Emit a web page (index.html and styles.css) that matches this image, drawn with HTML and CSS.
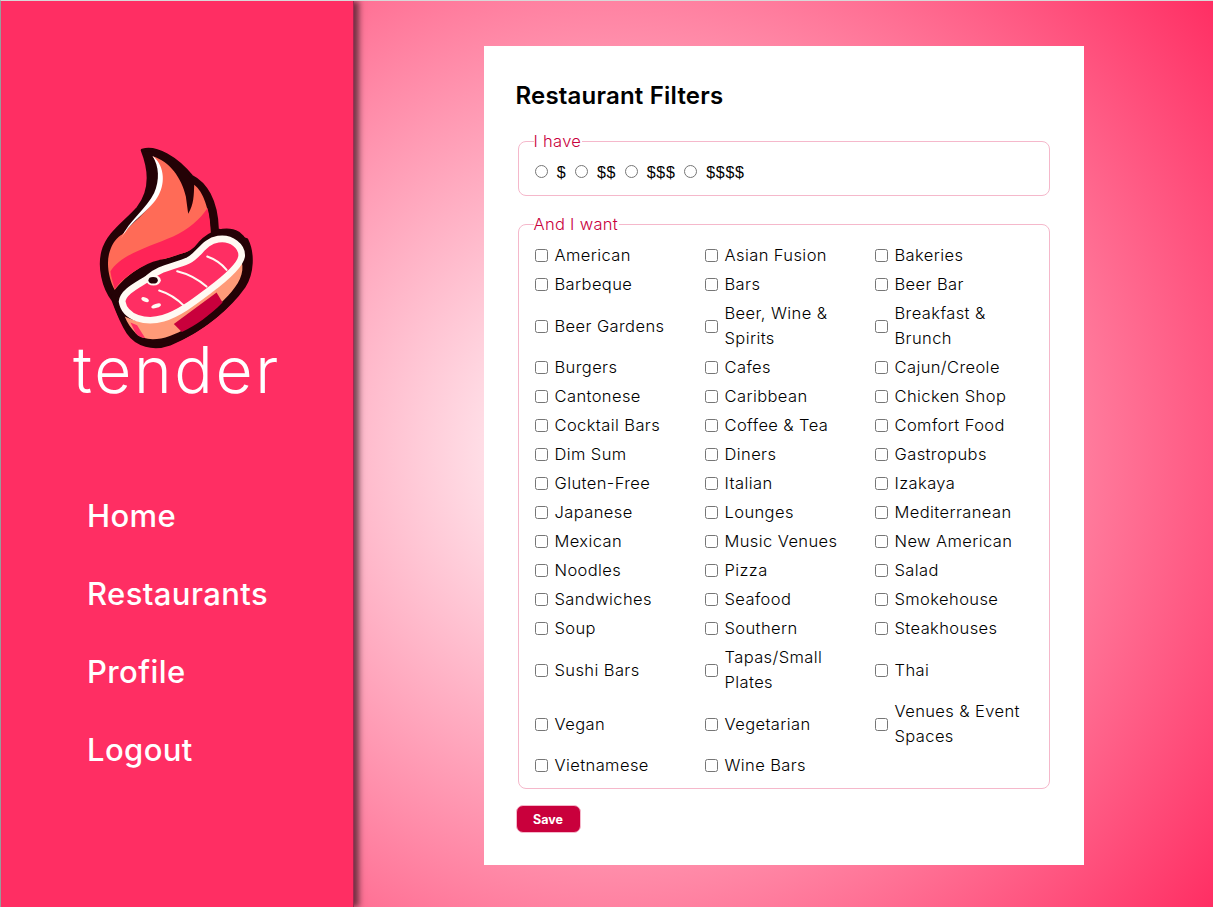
FILE: index.html
```html
<!DOCTYPE html>
<html lang="en">

<head>
    <meta charset="UTF-8">
    <meta name="viewport" content="width=device-width, initial-scale=1.0">
    <title>Restaurant Filters - tender</title>
    <link rel="stylesheet" href="styles.css">
</head>

<body>
    <aside class="sidebar">
        <div class="brand">
            <svg class="logo" viewBox="100 40 500 620" aria-hidden="true">
                <path class="outline" d="M248 62C290 50 350 85 395 140C435 160 470 210 472 300L560 330C580 370 578 430 552 470C510 530 430 600 330 642C280 660 230 645 205 608C190 585 175 550 160 510C130 470 118 410 130 365C145 310 195 280 235 235C270 190 275 130 248 62Z"/>
                <path class="flame" d="M278 80C330 95 365 145 378 200L385 252C402 225 402 195 403 165C430 185 450 240 452 310L425 345C395 370 300 385 240 415C205 435 180 460 165 480C148 450 138 400 150 365C165 320 185 320 195 305C230 270 280 230 295 190C310 150 305 110 278 80Z"/>
                <path class="flame-band" d="M152 425C180 375 270 350 340 320C385 300 420 270 443 235C450 262 452 290 452 312L425 345C395 370 300 385 240 415C205 435 180 455 165 478C160 460 155 445 152 425Z"/>
                <path class="flame-shine" d="M278 78C312 105 318 155 297 195C275 240 215 270 185 325C205 275 262 235 283 190C300 150 298 110 278 78Z"/>
                <path class="steak-dark" d="M160 500C190 450 250 405 300 395C350 390 395 375 420 340C450 305 500 290 535 310C570 335 575 400 552 460C520 520 440 595 340 635C280 655 235 640 210 610C190 580 170 540 160 500Z"/>
                <path class="steak-side" d="M195 560C250 590 320 575 380 535C440 500 500 460 545 395C555 430 535 465 505 497C455 550 400 592 330 618C290 632 252 632 228 610C213 595 202 578 195 560Z"/>
                <path class="steak-stripe" d="M342 582L470 488L488 518C450 556 410 586 366 606Z"/>
                <path class="steak-pink" d="M212 578L232 586L256 624C245 624 236 620 228 610Z"/>
                <path class="steak-top" d="M187 515C190 485 235 465 265 445C295 415 345 410 385 392C420 375 430 335 475 328C515 322 548 350 545 380C540 410 490 450 450 480C410 510 360 550 310 565C260 580 195 565 187 515Z"/>
                <ellipse class="bone" cx="281" cy="451" rx="22" ry="16"/>
                <ellipse class="hole" cx="280" cy="451" rx="14" ry="10"/>
                <path class="steak-line" d="M352 424C385 432 415 448 440 470M298 482C325 490 352 507 375 530M442 380C465 388 485 402 500 420"/>
                <ellipse class="fat" cx="256" cy="509" rx="12" ry="6" transform="rotate(25 256 509)"/>
                <ellipse class="fat" cx="289" cy="528" rx="15" ry="6" transform="rotate(-18 289 528)"/>
            </svg>
            <div class="brand-name">tender</div>
        </div>
        <nav class="nav">
            <a href="#">Home</a>
            <a href="#">Restaurants</a>
            <a href="#">Profile</a>
            <a href="#">Logout</a>
        </nav>
    </aside>

    <main class="main">
        <form class="card">
            <h1>Restaurant Filters</h1>

            <fieldset class="group">
                <legend>I have</legend>
                <div class="prices">
                    <label><input type="radio" name="price"> $</label>
                    <label><input type="radio" name="price"> $$</label>
                    <label><input type="radio" name="price"> $$$</label>
                    <label><input type="radio" name="price"> $$$$</label>
                </div>
            </fieldset>

            <fieldset class="group">
                <legend>And I want</legend>
                <div class="cuisines" id="cuisines"></div>
            </fieldset>

            <button type="button" class="save">Save</button>
        </form>
    </main>

    <script>
        const cuisines = ["American", "Asian Fusion", "Bakeries", "Barbeque", "Bars", "Beer Bar",
            "Beer Gardens", "Beer, Wine & Spirits", "Breakfast & Brunch", "Burgers", "Cafes", "Cajun/Creole",
            "Cantonese", "Caribbean", "Chicken Shop", "Cocktail Bars", "Coffee & Tea", "Comfort Food",
            "Dim Sum", "Diners", "Gastropubs", "Gluten-Free", "Italian", "Izakaya",
            "Japanese", "Lounges", "Mediterranean", "Mexican", "Music Venues", "New American",
            "Noodles", "Pizza", "Salad", "Sandwiches", "Seafood", "Smokehouse",
            "Soup", "Southern", "Steakhouses", "Sushi Bars", "Tapas/Small Plates", "Thai",
            "Vegan", "Vegetarian", "Venues & Event Spaces", "Vietnamese", "Wine Bars"];

        const container = document.getElementById('cuisines');
        cuisines.forEach((name) => {
            const label = document.createElement('label');
            label.className = 'cuisine';
            const box = document.createElement('input');
            box.type = 'checkbox';
            const text = document.createElement('span');
            text.textContent = name;
            label.append(box, text);
            container.appendChild(label);
        });
    </script>
</body>

</html>
```

FILE: styles.css
```css
* {
    box-sizing: border-box;
}

body {
    margin: 0;
    height: 907px;
    display: flex;
    overflow: hidden;
    font-family: 'Inter', 'Open Sans', sans-serif;
    border-top: 1px solid #d8d8d8;
    border-left: 1px solid #9a9a9a;
    color: #000;
    background: radial-gradient(circle farthest-corner at center, #fff 0%, #ff2e63 100%);
}

.sidebar {
    width: 353px;
    flex-shrink: 0;
    background-color: #ff2e63;
    box-shadow: 5px 0 6px rgba(40, 10, 20, 0.65);
    border-right: 1px solid #a02a50;
    position: relative;
}

.brand {
    padding-top: 142px;
    text-align: center;
}

.logo {
    display: block;
    width: 167px;
    height: 207px;
    margin-left: 92px;
}

.outline,
.steak-dark {
    fill: #240206;
    stroke: #240206;
    stroke-width: 10;
    stroke-linejoin: round;
}

.flame {
    fill: #ff6b57;
}

.flame-band {
    fill: #ff2457;
}

.flame-shine {
    fill: #fff;
}

.steak-side {
    fill: #ff9a78;
}

.steak-stripe {
    fill: #c9003c;
}

.steak-pink {
    fill: #ff2e63;
}

.steak-top {
    fill: #ff2e63;
    stroke: #fffaf3;
    stroke-width: 20;
    stroke-linejoin: round;
}

.bone {
    fill: #fffaf3;
}

.hole {
    fill: #240206;
}

.steak-line {
    fill: none;
    stroke: #fffaf3;
    stroke-width: 6;
    stroke-linecap: round;
}

.fat {
    fill: #fffaf3;
}

.brand-name {
    margin-top: -16px;
    color: #fff;
    font-size: 64px;
    font-weight: 300;
    line-height: 72px;
    letter-spacing: 2.7px;
}

.nav {
    margin-top: 87px;
    padding-left: 86px;
    display: flex;
    flex-direction: column;
    gap: 32px;
}

.nav a {
    color: #fff;
    font-size: 31px;
    font-weight: 450;
    letter-spacing: 0.4px;
    line-height: 46px;
    text-decoration: none;
}

.main {
    flex: 1;
    display: flex;
    justify-content: center;
    align-items: flex-start;
    padding-top: 45px;
}

.card {
    width: 600px;
    height: 819px;
    background-color: #fff;
    padding: 32px;
}

h1 {
    margin: 0 0 17px;
    font-size: 24px;
    font-weight: 600;
    letter-spacing: 0.2px;
    line-height: 36px;
}

.group {
    margin: 0 2px 18px;
    padding: 0 16px 10px;
    border: 1px solid #f5b8cb;
    border-radius: 8px;
    min-width: 0;
}

.group legend {
    margin-left: -1px;
    padding: 0 1px 0 0;
    color: #c9003c;
    font-size: 16.5px;
    font-weight: 300;
    letter-spacing: 0.3px;
    line-height: 20px;
}

.prices {
    display: flex;
    gap: 8.5px;
    padding: 10px 0 0;
    font-family: 'Liberation Sans', sans-serif;
    font-size: 16px;
    letter-spacing: 0.7px;
    line-height: 24px;
}

.prices input {
    margin: 0 4px 0 0;
    vertical-align: 0;
}

.cuisines {
    display: grid;
    grid-template-columns: repeat(3, 170px);
    row-gap: 4px;
    padding-top: 9px;
}

.cuisine {
    display: flex;
    align-items: center;
    font-size: 16.5px;
    font-weight: 300;
    letter-spacing: 0.4px;
    line-height: 25px;
    padding-right: 10px;
}

.cuisine input {
    margin: 0 7px 0 0;
    flex-shrink: 0;
}

.save {
    display: block;
    margin-top: -2px;
    width: 65px;
    height: 28px;
    padding: 0;
    background-color: #c9003c;
    color: #fff;
    border: 1px solid #f5b8cb;
    border-radius: 7px;
    font-family: inherit;
    font-size: 12.5px;
    font-weight: 700;
    cursor: pointer;
}
```
